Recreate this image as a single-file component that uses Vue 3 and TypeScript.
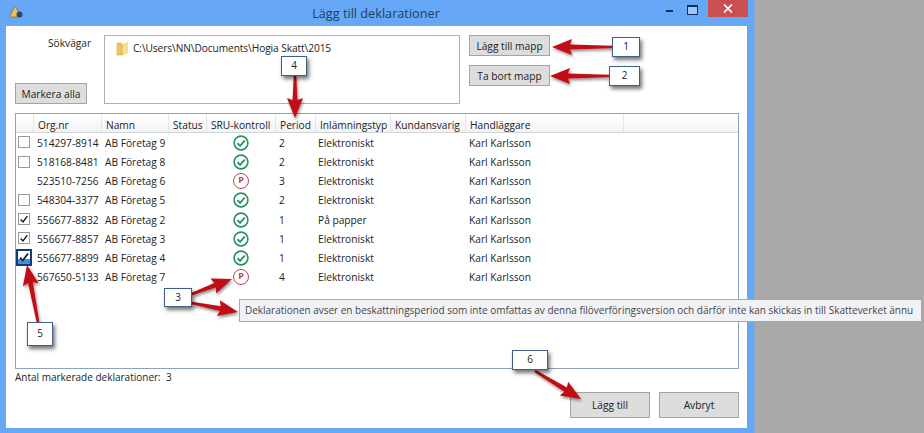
<script setup lang="ts">
interface Row {
  org: string
  name: string
  ok: boolean
  period: number
  type: string
  box: 'none' | 'off' | 'on' | 'focus'
}
const rows: Row[] = [
  { org: '514297-8914', name: 'AB Företag 9', ok: true, period: 2, type: 'Elektroniskt', box: 'off' },
  { org: '518168-8481', name: 'AB Företag 8', ok: true, period: 2, type: 'Elektroniskt', box: 'off' },
  { org: '523510-7256', name: 'AB Företag 6', ok: false, period: 3, type: 'Elektroniskt', box: 'none' },
  { org: '548304-3377', name: 'AB Företag 5', ok: true, period: 2, type: 'Elektroniskt', box: 'off' },
  { org: '556677-8832', name: 'AB Företag 2', ok: true, period: 1, type: 'På papper', box: 'on' },
  { org: '556677-8857', name: 'AB Företag 3', ok: true, period: 1, type: 'Elektroniskt', box: 'on' },
  { org: '556677-8899', name: 'AB Företag 4', ok: true, period: 1, type: 'Elektroniskt', box: 'focus' },
  { org: '567650-5133', name: 'AB Företag 7', ok: false, period: 4, type: 'Elektroniskt', box: 'none' }
]
const headers = ['', 'Org.nr', 'Namn', 'Status', 'SRU-kontroll', 'Period', 'Inlämningstyp', 'Kundansvarig', 'Handläggare', '']
const notes = [
  { n: '1', x: 612, y: 37, w: 28, h: 20 },
  { n: '2', x: 609, y: 66, w: 31, h: 20 },
  { n: '3', x: 164, y: 288, w: 28, h: 19 },
  { n: '4', x: 281, y: 56, w: 26, h: 20 },
  { n: '5', x: 27, y: 322, w: 26, h: 24 },
  { n: '6', x: 512, y: 350, w: 36, h: 20 }
]
// tapered arrows: [startX, startY, tipX, tipY]
const arrows: [number, number, number, number][] = [
  [612, 47, 552, 47],
  [609, 76, 550, 76],
  [295, 76, 295, 118],
  [38, 322, 27, 265],
  [192, 294, 232, 279],
  [192, 303, 238, 312],
  [535, 371, 581, 399]
]
function arrowPath(a: [number, number, number, number]): string {
  const [x1, y1, x2, y2] = a
  const len = Math.hypot(x2 - x1, y2 - y1)
  const ux = (x2 - x1) / len
  const uy = (y2 - y1) / len
  const px = -uy
  const py = ux
  const head = 18
  const bx = x2 - ux * head
  const by = y2 - uy * head
  const p = (x: number, y: number) => `${x.toFixed(1)} ${y.toFixed(1)}`
  return (
    'M' + p(x1 + px * 1.3, y1 + py * 1.3) +
    'L' + p(bx + px * 2.4, by + py * 2.4) +
    'L' + p(bx - ux * 2 + px * 8, by - uy * 2 + py * 8) +
    'L' + p(x2, y2) +
    'L' + p(bx - ux * 2 - px * 8, by - uy * 2 - py * 8) +
    'L' + p(bx - px * 2.4, by - py * 2.4) +
    'L' + p(x1 - px * 1.3, y1 - py * 1.3) + 'Z'
  )
}
</script>

<template>
  <div class="screen">
    <div class="window">
      <div class="titlebar">
        <svg class="app-icon" width="14" height="13" viewBox="0 0 14 13">
          <path d="M1 10 L5 2 Q7 0 8 3 L10 8 L8 11 L2 11Z" fill="#e6c266" stroke="#8a6a2a" stroke-width=".7" />
          <circle cx="10.5" cy="8.5" r="3" fill="#31475f" />
        </svg>
        <span class="title">Lägg till deklarationer</span>
        <div class="controls">
          <span class="min"></span>
          <span class="max"></span>
          <span class="close">
            <svg width="10" height="9" viewBox="0 0 10 9"><path d="M1 .5 9 8.5M9 .5 1 8.5" stroke="#fff" stroke-width="1.7" /></svg>
          </span>
        </div>
      </div>

      <div class="body">
        <div class="top">
          <div class="top-left">
            <span class="label">Sökvägar</span>
            <button class="btn select-all">Markera alla</button>
          </div>
          <div class="paths">
            <svg width="14" height="15" viewBox="0 0 14 15">
              <path d="M1 2h4l1 1v11H1z" fill="#e8c95a" />
              <path d="M6 3l6-2v11l-6 3z" fill="#f4e08e" />
              <path d="M1 2h4l1 1v11H1z" fill="none" stroke="#cfa83c" stroke-width=".6" />
            </svg>
            <span class="path-text">C:\Users\NN\Documents\Hogia Skatt\2015</span>
          </div>
          <div class="top-right">
            <button class="btn folder-btn">Lägg till mapp</button>
            <button class="btn folder-btn">Ta bort mapp</button>
          </div>
        </div>

        <div class="grid">
          <div class="head">
            <span v-for="(h, i) in headers" :key="i" class="hcell">{{ h }}</span>
          </div>
          <div v-for="r in rows" :key="r.org" class="row">
            <span class="cell box-cell">
              <span v-if="r.box !== 'none'" class="check" :class="r.box">
                <svg v-if="r.box !== 'off'" width="12" height="11" viewBox="0 0 12 11">
                  <path d="M2 5.5 4.8 8.5 10 1.5" fill="none" stroke="#1a1a1a" stroke-width="1.7" />
                </svg>
              </span>
            </span>
            <span class="cell">{{ r.org }}</span>
            <span class="cell">{{ r.name }}</span>
            <span class="cell"></span>
            <span class="cell sru">
              <svg v-if="r.ok" width="16" height="16" viewBox="0 0 16 16">
                <circle cx="8" cy="8" r="6.9" fill="none" stroke="#2a9162" stroke-width="1.6" />
                <path d="M4.4 8.2 7.1 10.9 11.8 5.5" fill="none" stroke="#2a9162" stroke-width="1.9" />
              </svg>
              <span v-else class="pmark">P</span>
            </span>
            <span class="cell">{{ r.period }}</span>
            <span class="cell type">{{ r.type }}</span>
            <span class="cell"></span>
            <span class="cell">Karl Karlsson</span>
          </div>
        </div>

        <div class="count">Antal markerade deklarationer:&nbsp; 3</div>

        <div class="actions">
          <button class="btn action">Lägg till</button>
          <button class="btn action">Avbryt</button>
        </div>
      </div>
    </div>

    <div class="tooltip">Deklarationen avser en beskattningsperiod som inte omfattas av denna filöverföringsversion och därför inte kan skickas in till Skatteverket ännu</div>

    <svg class="overlay" width="924" height="433" viewBox="0 0 924 433">
      <defs>
        <filter id="sh" x="-30%" y="-30%" width="160%" height="160%">
          <feDropShadow dx="1" dy="2" stdDeviation="1.6" flood-color="#000" flood-opacity=".45" />
        </filter>
      </defs>
      <path v-for="(a, i) in arrows" :key="i" :d="arrowPath(a)" fill="#c00d14" filter="url(#sh)" />
    </svg>

    <div
      v-for="b in notes"
      :key="b.n"
      class="note"
      :style="{ left: b.x + 'px', top: b.y + 'px', width: b.w + 'px', height: b.h + 'px' }"
    >{{ b.n }}</div>
  </div>
</template>

<style>
html, body { margin: 0; padding: 0; }
</style>

<style scoped>
.screen {
  position: relative;
  width: 924px;
  height: 433px;
  overflow: hidden;
  background: #a9a9a9;
  font-family: "Open Sans", "Noto Sans", sans-serif;
  font-size: 10.2px;
  color: #222;
}
.window {
  width: 755px;
  height: 433px;
  box-sizing: border-box;
  background: #66a8f6;
  padding: 0 7px 6px 6px;
  display: flex;
  flex-direction: column;
  border-right: 1px solid #8fa9c9;
}
.titlebar {
  height: 26px;
  flex: none;
  display: flex;
  align-items: center;
  position: relative;
  justify-content: center;
}
.app-icon { position: absolute; left: 3px; top: 6px; }
.title { font-size: 12.7px; color: #1f3f62; margin-left: -1px; padding-bottom: 1px; }
.controls {
  position: absolute;
  right: -1px;
  top: 0;
  display: flex;
  align-items: flex-start;
}
.min { width: 7px; height: 2px; background: #12305a; margin: 10px 14px 0 0; }
.max { width: 9px; height: 7px; border: 1px solid #12305a; border-top-width: 2px; margin: 5px 10px 0 0; background: #9cc5f5; }
.close {
  width: 40px;
  height: 17px;
  background: #c75050;
  display: flex;
  align-items: center;
  justify-content: center;
}
.body {
  flex: 1;
  background: #fff;
  padding: 9px 9px 10px;
  display: flex;
  flex-direction: column;
}
.top { display: flex; height: 69px; flex: none; }
.top-left {
  width: 89px;
  display: flex;
  flex-direction: column;
  justify-content: space-between;
  align-items: flex-start;
}
.label { margin: 1px 0 0 33px; }
.btn {
  font: inherit;
  color: #222;
  background: #dddddd;
  border: 1px solid #a4a4a4;
  padding: 0;
  box-sizing: border-box;
}
.select-all { width: 72px; height: 21px; }
.paths {
  width: 356px;
  height: 69px;
  box-sizing: border-box;
  border: 1px solid #b0b0b0;
  padding: 5px 0 0 11px;
  display: flex;
  align-items: flex-start;
  gap: 3px;
}
.path-text { letter-spacing: -.1px; }
.top-right {
  margin-left: 9px;
  display: flex;
  flex-direction: column;
  gap: 9px;
}
.folder-btn { width: 81px; height: 21px; }
.grid {
  margin-top: 9px;
  width: 724px;
  height: 256px;
  flex: none;
  box-sizing: border-box;
  border: 1px solid #8fa3bd;
}
.head, .row {
  display: grid;
  grid-template-columns: 18px 68px 67px 38px 69px 40px 75px 75px 158px 1fr;
}
.head {
  height: 18.4px;
  background: linear-gradient(#fff, #f2f3f5);
  border-bottom: 1px solid #d5d5d5;
}
.hcell {
  border-right: 1px solid #e3e5e8;
  padding: 4px 0 0 4px;
  white-space: nowrap;
  overflow: hidden;
}
.hcell:last-child { border-right: none; }
.row { height: 19.15px; align-items: center; }
.cell { padding-left: 3px; white-space: nowrap; }
.type { padding-left: 2px; }
.box-cell { padding-left: 2px; position: relative; height: 19px; }
.check {
  position: absolute;
  left: 2px;
  top: 3px;
  width: 12px;
  height: 12px;
  box-sizing: border-box;
  border: 1px solid #9a9a9a;
  background: #fff;
  display: flex;
  align-items: center;
  justify-content: center;
}
.check.focus {
  left: 0;
  top: 1px;
  width: 16px;
  height: 17px;
  border: 2px solid #143a78;
  background: linear-gradient(#fff 65%, #3f8fe8 65%);
}
.sru { padding-left: 26px; display: flex; align-items: center; }
.pmark {
  width: 16px;
  height: 16px;
  box-sizing: border-box;
  border: 1.7px solid #b2444f;
  border-radius: 50%;
  color: #b2444f;
  font-size: 9px;
  font-weight: 700;
  line-height: 12.6px;
  text-align: center;
}
.count { margin-top: -1px; height: 18px; line-height: 18px; font-size: 10px; }
.actions {
  margin-top: 6px;
  display: flex;
  justify-content: flex-end;
  gap: 9px;
  width: 724px;
}
.action { width: 80px; height: 26px; }
.tooltip {
  position: absolute;
  left: 239px;
  top: 299px;
  width: 683px;
  height: 23px;
  box-sizing: border-box;
  background: #f2f2f6;
  border: 1px solid #a8a8a8;
  padding: 0 0 0 5px;
  line-height: 21px;
  white-space: nowrap;
  font-size: 9.98px;
  color: #444;
  overflow: hidden;
}
.overlay { position: absolute; left: 0; top: 0; pointer-events: none; }
.note {
  position: absolute;
  box-sizing: border-box;
  background: #fff;
  border: 1px solid #3f5f8a;
  box-shadow: 2px 3px 4px rgba(0, 0, 0, .55);
  display: flex;
  align-items: center;
  justify-content: center;
  font-size: 10px;
  padding-bottom: 2px;
}
</style>
